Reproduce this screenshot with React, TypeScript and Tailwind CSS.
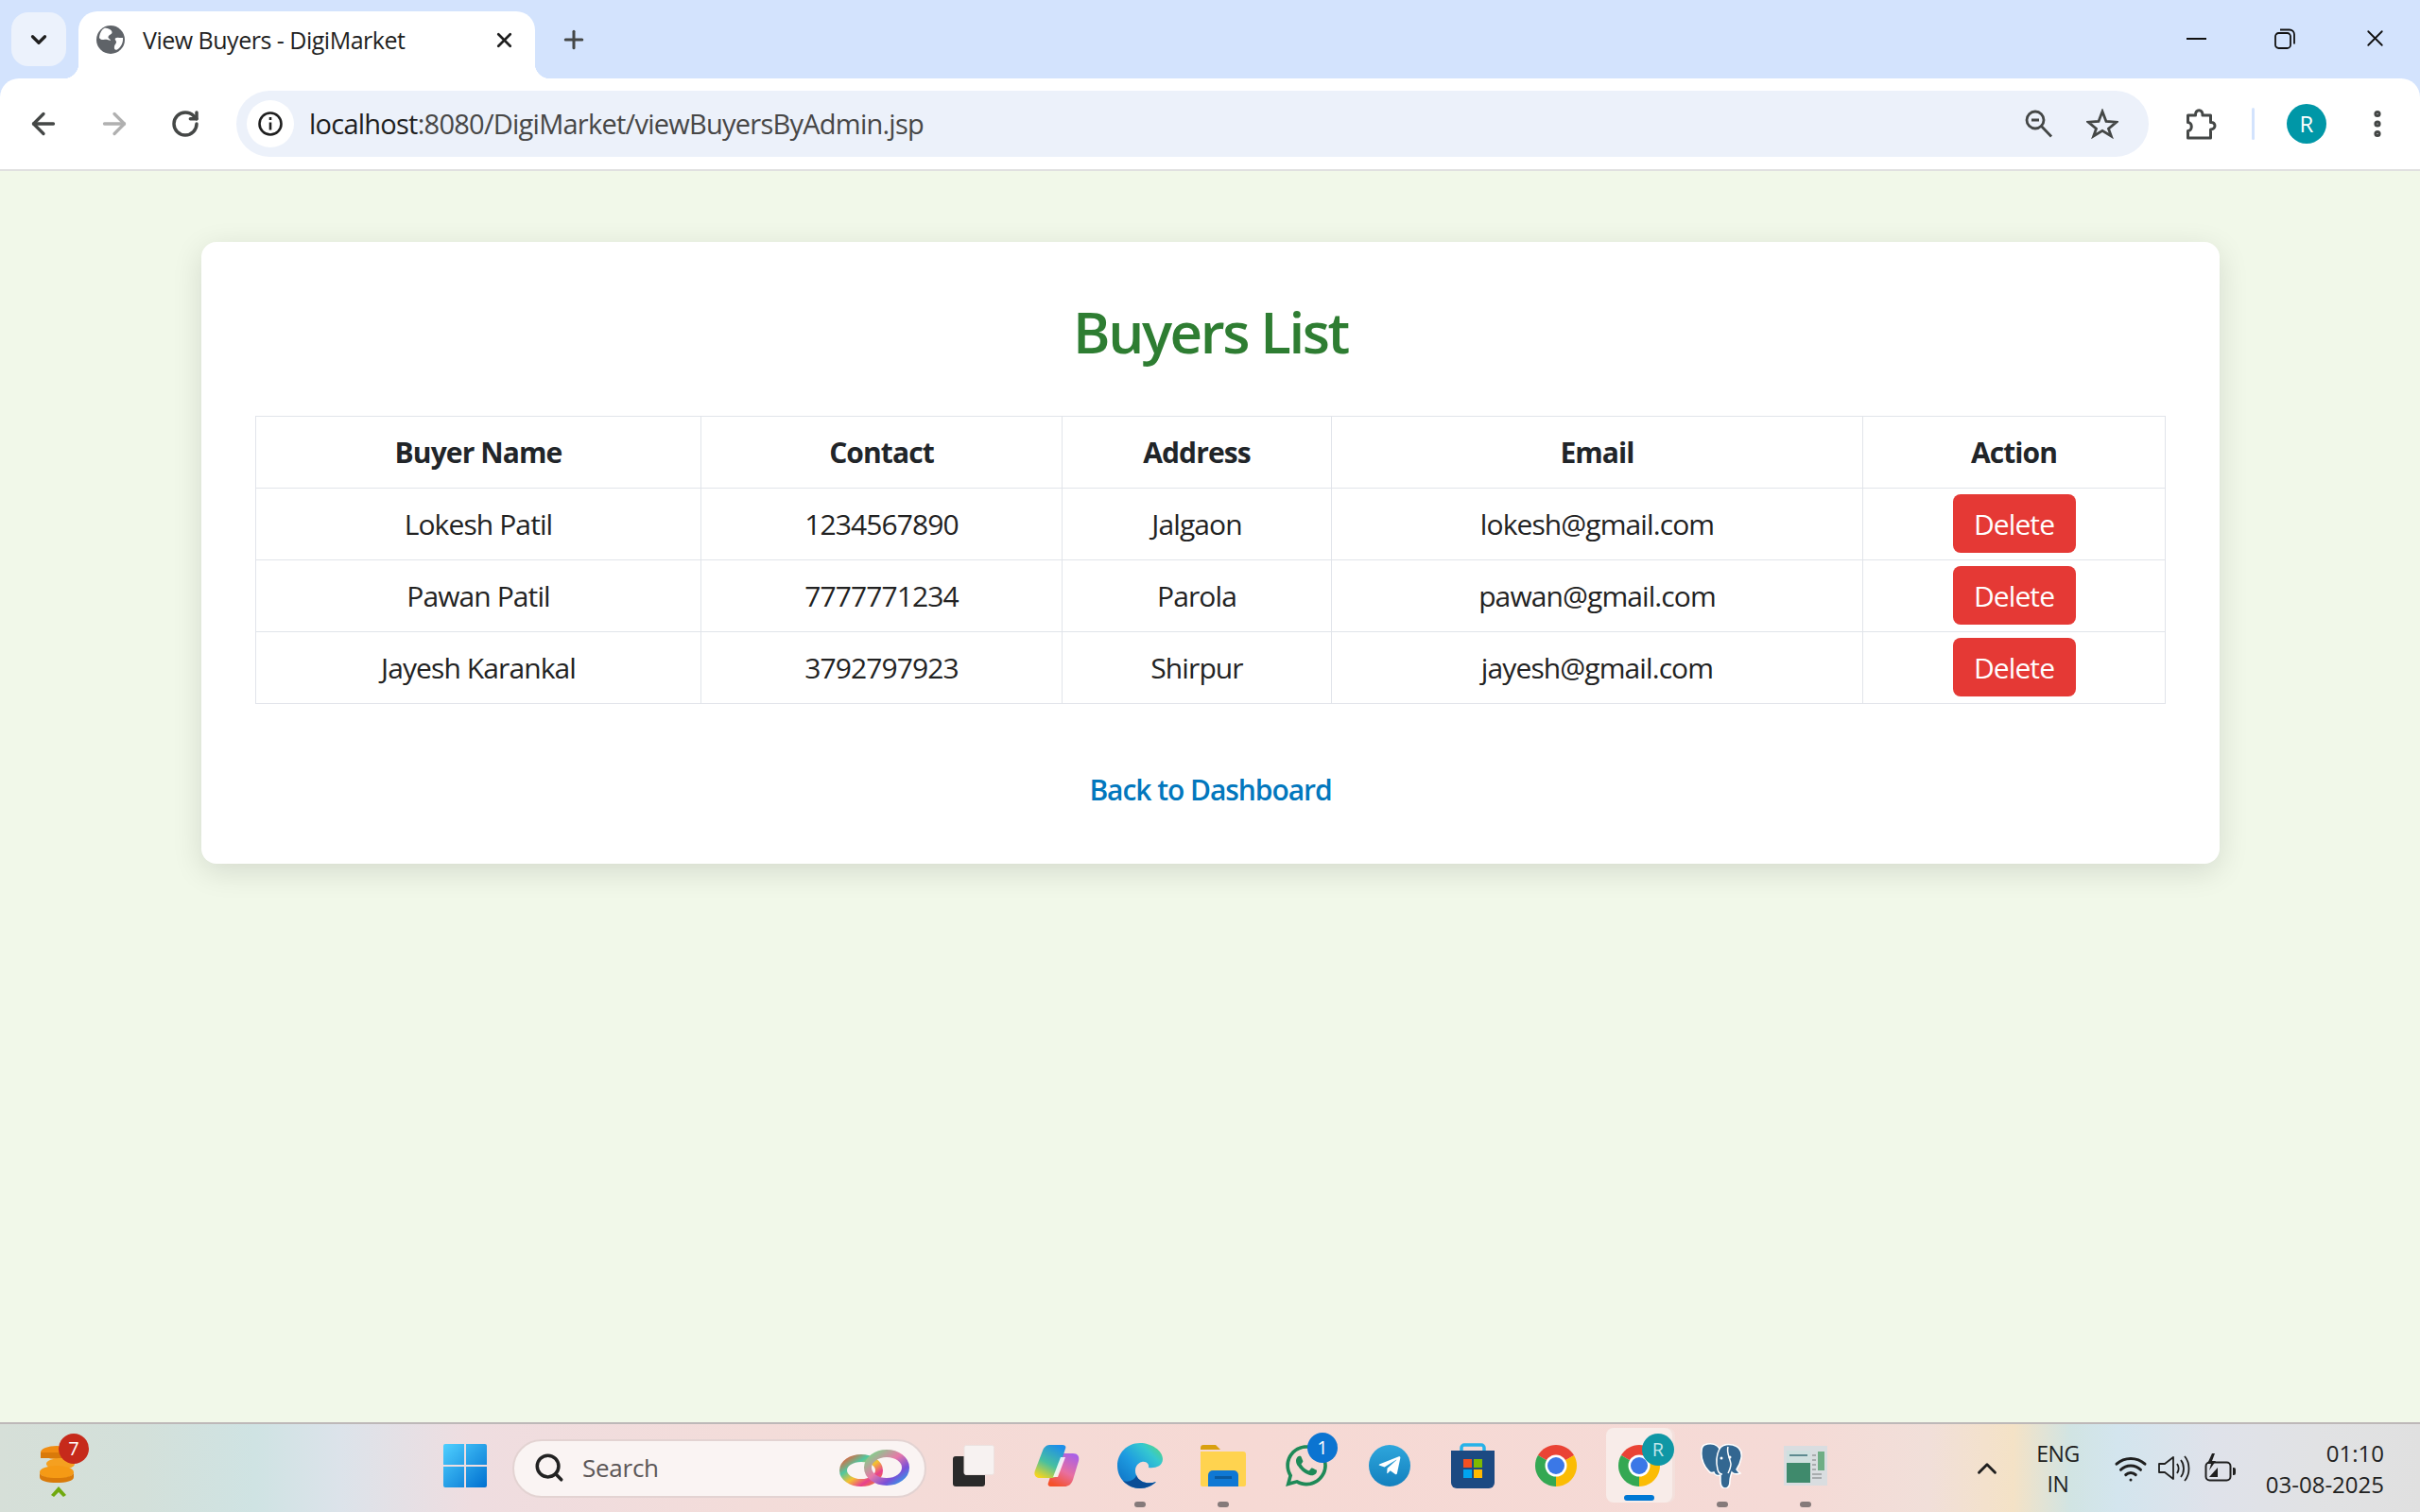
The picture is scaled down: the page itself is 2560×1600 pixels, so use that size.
import { ArrowLeft, ArrowRight, ChevronDown, ChevronUp, MoreVertical, Plus, RotateCw, Search, Wifi, X } from "lucide-react";
import { FaTelegramPlane, FaWhatsapp } from "react-icons/fa";

const buyers = [
  { name: "Lokesh Patil", contact: "1234567890", address: "Jalgaon", email: "lokesh@gmail.com" },
  { name: "Pawan Patil", contact: "7777771234", address: "Parola", email: "pawan@gmail.com" },
  { name: "Jayesh Karankal", contact: "3792797923", address: "Shirpur", email: "jayesh@gmail.com" },
];

const ChromeLogo = () => (
  <svg width="48" height="48" viewBox="0 0 48 48">
    <path d="M24 24L43.05 13A22 22 0 0 0 4.95 13Z" fill="#ea4335" />
    <path d="M24 24L4.95 13A22 22 0 0 0 24 46Z" fill="#34a853" />
    <path d="M24 24L24 46A22 22 0 0 0 43.05 13Z" fill="#fbbc04" />
    <circle cx="24" cy="24" r="11.5" fill="#fff" />
    <circle cx="24" cy="24" r="9" fill="#3b78e7" />
  </svg>
);

const TabBar = () => (
  <div className="flex h-[83px] items-start bg-[#d3e3fd]">
    <button className="ml-3 mt-[13px] flex h-[57px] w-[58px] items-center justify-center rounded-[18px] bg-[#ecf2fc] text-[#1f1f1f]">
      <ChevronDown size={26} strokeWidth={3} />
    </button>
    <div className="relative ml-[13px] mt-3 flex h-[71px] w-[483px] items-start rounded-t-[20px] bg-white pl-[19px] pr-[20px] pt-[15px]">
      <span className="absolute bottom-0 left-[-16px] h-4 w-4 bg-[radial-gradient(circle_at_0_0,#d3e3fd_16px,#fff_16.5px)]" />
      <span className="absolute bottom-0 right-[-16px] h-4 w-4 bg-[radial-gradient(circle_at_100%_0,#d3e3fd_16px,#fff_16.5px)]" />
      <svg width="30" height="30" viewBox="0 0 30 30" className="shrink-0">
        <circle cx="15" cy="15" r="15" fill="#5f6368" />
        <path d="M9 2.5c4 .5 7 2 7.5 4.5.4 2.5-3.5 2.5-4 5-.4 2 2.500 2 2.500 4-2-.5-4.500-1.500-7-1-2 .4-4.500-.5-5-2C3.500 8 5.500 4 9 2.500ZM28 13c.5 5-2 10-6 12.500-2.500 1-3.500-1-3-3.500.3-2 2-2.500 2-4.500-.1-1.800-2-2.500-1-4 1.500-1.500 5-.2 8-.5Z" fill="#fff" />
      </svg>
      <span className="ml-[19px] w-[369px] whitespace-nowrap text-[25px] leading-[30px] tracking-[-0.02em] text-[#1f1f1f]">View Buyers - DigiMarket</span>
      <X size={25} strokeWidth={2.6} className="ml-[1px] mt-[3px] text-[#1f1f1f]" />
    </div>
    <Plus size={30} strokeWidth={2.4} className="ml-[26px] mt-[27px] text-[#444746]" />
    <div className="ml-auto mt-[26px] flex items-center text-[#111]">
      <span className="flex w-[94px] justify-center">
        <span className="h-[2px] w-[21px] bg-[#111]" />
      </span>
      <span className="flex w-[94px] justify-center">
        <svg width="22" height="22" viewBox="0 0 22 22" fill="none" stroke="#111" strokeWidth="1.8">
          <rect x="1" y="5" width="16" height="16" rx="3.500" />
          <path d="M6 1.500h10a5 5 0 0 1 5 5v10" />
        </svg>
      </span>
      <span className="flex w-[96px] justify-center">
        <X size={29} strokeWidth={1.5} />
      </span>
    </div>
  </div>
);

const Toolbar = () => (
  <div className="bg-[#d3e3fd]">
    <div className="flex h-[96px] items-center rounded-t-[20px] bg-white pl-[28px]">
      <ArrowLeft size={36} strokeWidth={2.2} className="text-[#444746]" />
      <ArrowRight size={36} strokeWidth={2.2} className="ml-[39px] text-[#b0b0b0]" />
      <RotateCw size={32} strokeWidth={2.6} className="ml-[41px] text-[#444746]" />
      <div className="ml-[38px] flex h-[70px] w-[2023px] items-center rounded-full bg-[#ecf1fa] pl-[11px] pr-[32px]">
        <span className="flex h-[50px] w-[50px] items-center justify-center rounded-full bg-white">
          <svg width="28" height="28" viewBox="0 0 28 28" fill="none" stroke="#1f1f1f" strokeWidth="2.600">
            <circle cx="14" cy="14" r="11.500" />
            <path d="M14 12.500v8M14 7v3" />
          </svg>
        </span>
        <span className="ml-[16px] whitespace-nowrap text-[29px] tracking-[-0.026em] text-[#1f1f1f]">
          localhost<span className="text-[#474747]">:8080/DigiMarket/viewBuyersByAdmin.jsp</span>
        </span>
        <svg width="30" height="30" viewBox="0 0 30 30" className="ml-auto" fill="none" stroke="#444746" strokeWidth="2.800">
          <circle cx="11" cy="11" r="9" />
          <path d="M17.500 17.500L28 28.500M7 11h8" />
        </svg>
        <svg width="34" height="32" viewBox="0 0 34 32" className="ml-[35px]" fill="none" stroke="#444746" strokeWidth="2.800" strokeMiterlimit="10">
          <path d="M17 3l4 10.500 11 .7-8.500 7L26.300 29 17 23.300 7.700 29l2.800-7.800-8.500-7 11-.7Z" />
        </svg>
      </div>
      <svg width="34" height="34" viewBox="0 0 34 34" className="ml-[39px]" fill="none" stroke="#444746" strokeWidth="3">
        <path d="M2.500 8h8c-.5-7 8-7 7.500 0h8.500v7.500c6-.5 6 7.500 0 7.500v9H2.500v-7.500c5 0 5-9 0-9Z" strokeLinejoin="round" />
      </svg>
      <span className="ml-[36px] h-[34px] w-[3px] rounded-full bg-[#d3e3fd]" />
      <span className="ml-[34px] flex h-[42px] w-[42px] items-center justify-center rounded-full bg-[#0097a7] text-[24px] text-white">R</span>
      <MoreVertical size={36} strokeWidth={2.800} className="ml-[36px] text-[#444746]" />
    </div>
  </div>
);

const BuyersCard = () => (
  <div className="ml-[213px] mt-[75px] w-[2135px] rounded-2xl bg-white px-[57px] pb-[58px] pt-[55px] shadow-[0_8px_32px_rgba(0,0,0,0.12)]">
    <h1 className="mb-[49px] text-center text-[60px] font-semibold leading-[80px] tracking-[-0.04em] text-[#2e7d32]">Buyers List</h1>
    <table className="w-[2020px] table-fixed border-collapse text-center text-[30px] tracking-[-0.03em] text-[#222]">
      <colgroup>
        <col className="w-[471px]" />
        <col className="w-[382px]" />
        <col className="w-[285px]" />
        <col className="w-[562px]" />
        <col className="w-[320px]" />
      </colgroup>
      <thead>
        <tr className="h-[76px]">
          {["Buyer Name", "Contact", "Address", "Email", "Action"].map((h) => (
            <th key={h} className="border border-[#e1e4ea] p-0 font-bold text-[#212529]">{h}</th>
          ))}
        </tr>
      </thead>
      <tbody>
        {buyers.map((b) => (
          <tr key={b.email} className="h-[76px]">
            <td className="border border-[#e1e4ea] p-0">{b.name}</td>
            <td className="border border-[#e1e4ea] p-0">{b.contact}</td>
            <td className="border border-[#e1e4ea] p-0">{b.address}</td>
            <td className="border border-[#e1e4ea] p-0">{b.email}</td>
            <td className="border border-[#e1e4ea] p-0">
              <button className="mb-[2px] h-[62px] w-[130px] rounded-lg bg-[#e53935] pt-[2px] text-white">Delete</button>
            </td>
          </tr>
        ))}
      </tbody>
    </table>
    <a href="#" className="mt-[71px] block text-center text-[30px] font-semibold leading-[40px] tracking-[-0.035em] text-[#0277bd]">Back to Dashboard</a>
  </div>
);

const Slot = ({ children, dot }: { children: React.ReactNode; dot?: boolean }) => (
  <div className="relative flex h-[93px] w-[88px] shrink-0 items-center justify-center pb-[6px]">
    {children}
    {dot && <span className="absolute bottom-[5px] left-[38px] h-[6px] w-[12px] rounded-full bg-[#857a7a]" />}
  </div>
);

const Taskbar = () => (
  <div className="flex h-[95px] items-center border-t-2 border-[#bdb8b8] bg-[linear-gradient(90deg,#d6dfd8_0,#d3e0da_150px,#cfe3e3_270px,#dce3ea_360px,#efdde0_500px,#f3dcd9_800px,#f6d9d4_1300px,#f5dad6_1900px,#f1dfd9_2040px,#f4e2c6_2130px,#d1e4e3_2190px,#d3e5ee_2240px,#dfe2ea_2340px,#e1e2e4_2450px,#e0e0e0_2560px)]">
    <div className="relative ml-[42px] h-[62px] w-[40px] shrink-0">
      <svg width="40" height="62" viewBox="0 0 40 62">
        <ellipse cx="18" cy="14" rx="17" ry="7" fill="#f08c12" />
        <rect x="1" y="14" width="34" height="6" fill="#d97a0a" />
        <ellipse cx="22" cy="26" rx="15" ry="6" fill="#f5a020" />
        <ellipse cx="18" cy="35" rx="18" ry="7" fill="#f59a15" />
        <path d="M0 35v5c0 4 8 6 18 6s18-2 18-6v-5c0 4-8 6-18 6S0 39 0 35Z" fill="#d97a0a" />
        <path d="M20 50l8 9-3 2-5-5-5 5-3-2Z" fill="#70a90f" />
      </svg>
      <span className="absolute left-[20px] top-[-6px] flex h-[32px] w-[32px] items-center justify-center rounded-full bg-[#c62a1b] text-[20px] text-white">7</span>
    </div>
    <div className="ml-[366px] flex shrink-0 items-center">
      <Slot>
        <svg width="46" height="46" viewBox="0 0 46 46">
          <defs>
            <linearGradient id="win" x1="0" y1="0" x2="1" y2="1">
              <stop offset="0" stopColor="#4fd0ff" />
              <stop offset="1" stopColor="#0070d0" />
            </linearGradient>
          </defs>
          <path d="M2 0h20v22H0V2a2 2 0 0 1 2-2ZM24 0h20a2 2 0 0 1 2 2v20H24ZM0 24h22v22H2a2 2 0 0 1-2-2ZM24 24h22v20a2 2 0 0 1-2 2H24Z" fill="url(#win)" />
        </svg>
      </Slot>
      <div className="ml-[6px] flex h-[62px] w-[438px] shrink-0 items-center rounded-full border-2 border-[#e3d3d2] bg-[#faf4f3] pb-[1px] pl-[20px] pr-[16px]">
        <Search size={34} strokeWidth={2.500} className="text-[#222]" />
        <span className="ml-[18px] text-[26px] tracking-[-0.01em] text-[#5c5757]">Search</span>
        <svg width="74" height="42" viewBox="0 0 74 42" className="ml-auto" fill="none" strokeWidth="8">
          <defs>
            <linearGradient id="ringA" x1="0" y1="0" x2="1" y2="1">
              <stop offset="0" stopColor="#e8603a" />
              <stop offset="0.3" stopColor="#4fc8a0" />
              <stop offset="0.55" stopColor="#f5c030" />
              <stop offset="0.8" stopColor="#e8408f" />
              <stop offset="1" stopColor="#f08030" />
            </linearGradient>
            <linearGradient id="ringB" x1="0" y1="0" x2="1" y2="1">
              <stop offset="0" stopColor="#78d888" />
              <stop offset="0.45" stopColor="#e878a8" />
              <stop offset="0.75" stopColor="#7a4fd8" />
              <stop offset="1" stopColor="#2f9fe8" />
            </linearGradient>
          </defs>
          <ellipse cx="23" cy="24" rx="19" ry="13" stroke="url(#ringA)" />
          <ellipse cx="50" cy="21" rx="20" ry="15" stroke="url(#ringB)" />
        </svg>
      </div>
      <div className="ml-[6px] flex items-center">
        <Slot>
          <svg width="44" height="44" viewBox="0 0 44 44">
            <rect x="0" y="12" width="34" height="32" rx="3" fill="#2a2a2a" />
            <rect x="12" y="0.500" width="31.500" height="31" rx="2" fill="#f7f2f1" stroke="#ece2e0" />
          </svg>
        </Slot>
        <Slot>
          <svg width="48" height="44" viewBox="0 0 48 44">
            <defs>
              <linearGradient id="cpA" x1="0.7" y1="0" x2="0.2" y2="1">
                <stop offset="0" stopColor="#1f8fe8" />
                <stop offset="0.55" stopColor="#47c0a0" />
                <stop offset="1" stopColor="#f7d51d" />
              </linearGradient>
              <linearGradient id="cpB" x1="0.8" y1="0" x2="0.3" y2="1">
                <stop offset="0" stopColor="#a860e8" />
                <stop offset="0.55" stopColor="#e86fa0" />
                <stop offset="1" stopColor="#f5502a" />
              </linearGradient>
            </defs>
            <path d="M32 9h9c5 0 7 3 6 8l-6 20c-2 5-5 7-9 7H18c-3 0-4-2-3-4l9-28c1-2 3-3 5-3Z" fill="url(#cpB)" />
            <path d="M16 0h14c3 0 4 2 3 4l-9 28c-1 2-3 3-5 3H6c-4 0-7-3-5-8L9 6c1-3 4-6 7-6Z" fill="url(#cpA)" />
            <path d="M28 13h5l-8 21h-5Z" fill="#fff" opacity="0.85" />
          </svg>
        </Slot>
        <Slot dot>
          <svg width="48" height="48" viewBox="0 0 48 48">
            <defs>
              <linearGradient id="edgeA" x1="0" y1="1" x2="1" y2="0">
                <stop offset="0" stopColor="#0c6bc0" />
                <stop offset="0.45" stopColor="#1e9be0" />
                <stop offset="0.75" stopColor="#35c8d0" />
                <stop offset="1" stopColor="#5fd86a" />
              </linearGradient>
            </defs>
            <path d="M24 0C10 0 0 11 0 24c0 14 11 24 24 24 7 0 13-3 17-7-8 3-18 1-21-7-3-7 1-13 6-14 5-1 8 3 7 6 6 1 15-1 15-9C48 8 36 0 24 0Z" fill="url(#edgeA)" />
            <path d="M6 40c6 2 13-1 14-6 3 8 13 10 21 7-4 4-10 7-17 7-7 0-13-3-18-8Z" fill="#0b4d96" />
          </svg>
        </Slot>
        <Slot dot>
          <svg width="48" height="44" viewBox="0 0 48 44">
            <path d="M0 3a3 3 0 0 1 3-3h13l5 5H0Z" fill="#d9a00f" />
            <path d="M0 7h45a3 3 0 0 1 3 3v32a2 2 0 0 1-2 2H2a2 2 0 0 1-2-2Z" fill="#ffd34f" />
            <path d="M8 44V32a5 5 0 0 1 5-5h22a5 5 0 0 1 5 5v12Z" fill="#0f78d4" />
            <rect x="15" y="33" width="18" height="3" fill="#0a5aa0" />
          </svg>
        </Slot>
        <Slot>
          <div className="relative">
            <FaWhatsapp size={50} className="text-[#1e8a58]" />
            <span className="absolute left-[26px] top-[-10px] flex h-[32px] w-[32px] items-center justify-center rounded-full bg-[#0b74d1] text-[20px] text-white">1</span>
          </div>
        </Slot>
        <Slot>
          <span className="flex h-[44px] w-[44px] items-center justify-center rounded-full bg-[linear-gradient(180deg,#2ea6dc,#1380be)] text-white">
            <FaTelegramPlane size={26} />
          </span>
        </Slot>
        <Slot>
          <svg width="46" height="48" viewBox="0 0 46 48">
            <path d="M11 12V5a3 3 0 0 1 3-3h18a3 3 0 0 1 3 3v7" fill="none" stroke="#27b2e8" strokeWidth="3.500" />
            <path d="M0 8h46v34a6 6 0 0 1-6 6H6a6 6 0 0 1-6-6Z" fill="#1c4a82" />
            <rect x="13" y="17" width="9" height="9" fill="#f25022" />
            <rect x="24" y="17" width="9" height="9" fill="#7fba00" />
            <rect x="13" y="28" width="9" height="9" fill="#00a4ef" />
            <rect x="24" y="28" width="9" height="9" fill="#ffb900" />
          </svg>
        </Slot>
        <Slot>
          <ChromeLogo />
        </Slot>
        <Slot>
          <div className="relative flex h-[79px] w-[70px] items-center justify-center rounded-lg bg-[#f8ece9] shadow-[3px_0_0_#f3e0dc]">
            <ChromeLogo />
            <span className="absolute left-[38px] top-[6px] flex h-[34px] w-[34px] items-center justify-center rounded-full bg-[#0f97a5] text-[20px] text-[#bfe6ea]">R</span>
            <span className="absolute bottom-[2px] left-[19px] h-[6px] w-[32px] rounded-full bg-[#0078d4]" />
          </div>
        </Slot>
        <Slot dot>
          <svg width="46" height="48" viewBox="0 0 46 48">
            <path d="M4 2c8-3 14 0 16 4 3-4 9-5 14-4 8 2 10 8 9 14-1 5-3 9-5 12 1 2 3 3 4 4-3 1-7 1-9-1-1 3-2 6-2 9 0 4-1 8-5 8s-5-4-5-8v-6c-3 1-6 0-7-3-2 1-4 1-6-2C5 26 0 18 1 9c0-3 1-6 3-7Z" fill="#336791" stroke="#fff" strokeWidth="1.500" />
            <path d="M20 6c-3 6-4 14-2 22 1 4 3 5 5 5M29 4c-2 6 2 12 3 18 0 4-2 8-3 10" fill="none" stroke="#fff" strokeWidth="1.500" />
            <circle cx="22" cy="16" r="1.500" fill="#fff" />
            <circle cx="31" cy="15" r="1.500" fill="#fff" />
          </svg>
        </Slot>
        <Slot dot>
          <svg width="46" height="42" viewBox="0 0 46 42">
            <rect width="46" height="42" fill="#d9dde0" />
            <rect x="3" y="5" width="25" height="34" fill="#3f8a6c" />
            <rect x="3" y="5" width="25" height="13" fill="#cfe0df" />
            <rect x="6" y="9" width="19" height="2" fill="#5d8a90" />
            <rect x="36" y="6" width="7" height="20" fill="#6fae85" />
            <path d="M30 10h4M30 15h4M30 20h4M30 25h4M30 30h10M30 34h10" stroke="#a8acae" strokeWidth="2" />
          </svg>
        </Slot>
      </div>
    </div>
    <ChevronUp size={34} strokeWidth={2} className="ml-[131px] shrink-0 text-[#1f1f1f]" />
    <div className="ml-[31px] w-[54px] shrink-0 text-center text-[23px] leading-[32px] tracking-[-0.02em] text-[#222]">
      <div>ENG</div>
      <div>IN</div>
    </div>
    <Wifi size={36} strokeWidth={2} className="ml-[32px] shrink-0 text-[#1f1f1f]" />
    <svg width="34" height="32" viewBox="0 0 34 32" className="ml-[11px] shrink-0" fill="none" stroke="#1f1f1f" strokeWidth="1.800">
      <path d="M1 11v9h6l9 7V4l-9 7Z" strokeLinejoin="round" />
      <path d="M20 11c2 3 2 7 0 10M24 7c4 5 4 13 0 18M28 3c6 7 6 19 0 26" />
    </svg>
    <svg width="34" height="32" viewBox="0 0 34 32" className="ml-[15px] shrink-0">
      <rect x="1.500" y="9.500" width="26" height="19" rx="4" fill="none" stroke="#1f1f1f" strokeWidth="2" />
      <path d="M30 15h1a2 2 0 0 1 2 2v4a2 2 0 0 1-2 2h-1Z" fill="#1f1f1f" />
      <path d="M5 25l9-10v10Z" fill="#1f1f1f" />
      <path d="M8 0L3 11h4l-2 7 7-10H8l3-8Z" fill="#1f1f1f" />
    </svg>
    <div className="ml-auto mr-[38px] shrink-0 text-right text-[24px] leading-[33px] text-[#222]">
      <div>01:10</div>
      <div>03-08-2025</div>
    </div>
  </div>
);

export default function App() {
  return (
    <div className="flex h-screen flex-col overflow-hidden bg-[#f1f8e9] font-['Open_Sans',sans-serif]">
      <TabBar />
      <Toolbar />
      <div className="h-[2px] bg-[#e0e0e0]" />
      <div className="min-h-0 flex-1">
        <BuyersCard />
      </div>
      <Taskbar />
    </div>
  );
}
